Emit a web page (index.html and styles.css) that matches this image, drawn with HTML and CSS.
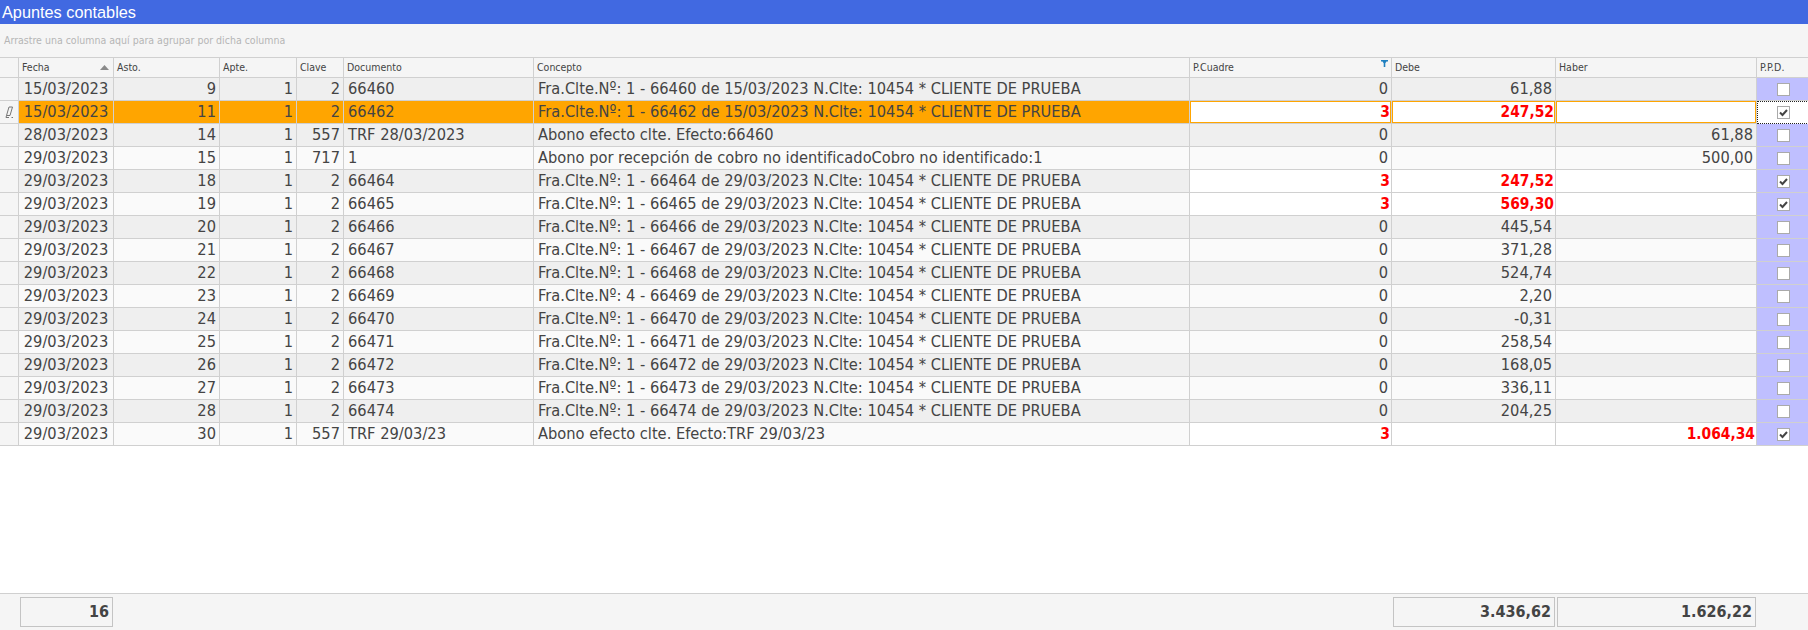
FILE: index.html
```html
<!DOCTYPE html>
<html lang="es">
<head>
<meta charset="utf-8">
<title>Apuntes contables</title>
<link rel="stylesheet" href="styles.css">
</head>
<body>
<div class="app">
  <div class="title">Apuntes contables</div>
  <div class="group">Arrastre una columna aquí para agrupar por dicha columna</div>
  <table class="grid">
    <colgroup>
      <col class="c-ind"><col class="c-fecha"><col class="c-asto"><col class="c-apte"><col class="c-clave"><col class="c-doc"><col class="c-con"><col class="c-cua"><col class="c-debe"><col class="c-haber"><col class="c-ppd">
    </colgroup>
    <thead>
      <tr>
        <th></th>
        <th><span class="hwrap">Fecha<svg class="sort" width="9" height="5" viewBox="0 0 9 5"><path d="M4.500 0L9 5H0z" fill="#8a8a8a"/></svg></span></th>
        <th>Asto.</th><th>Apte.</th><th>Clave</th><th>Documento</th><th>Concepto</th>
        <th><span class="hwrap">P.Cuadre<svg class="filter" width="7" height="7" viewBox="0 0 7 7"><path d="M0 0H7V1.500H5.500L4.300 3.200V7H2.700V3.200L1.500 1.500H0z" fill="#2080c0"/></svg></span></th>
        <th>Debe</th><th>Haber</th><th>P.P.D.</th>
      </tr>
    </thead>
    <tbody>
      <tr class="odd"><td class="ind"></td><td class="ctr">15/03/2023</td><td class="num">9</td><td class="num">1</td><td class="num">2</td><td>66460</td><td>Fra.Clte.Nº: 1 - 66460 de 15/03/2023 N.Clte: 10454 * CLIENTE DE PRUEBA</td><td class="num">0</td><td class="num">61,88</td><td class="num"></td><td class="ppd"><span class="cb"></span></td></tr>
      <tr class="sel"><td class="ind"><svg class="pencil" width="9" height="12" viewBox="0 0 9 12"><path d="M4 1H7.500L5 9.500H1.500ZM1.500 9.500L1 11.500H4M6.500 11.500H8" fill="none" stroke="#777" stroke-width="1"/></svg></td><td class="ctr">15/03/2023</td><td class="num">11</td><td class="num">1</td><td class="num">2</td><td>66462</td><td>Fra.Clte.Nº: 1 - 66462 de 15/03/2023 N.Clte: 10454 * CLIENTE DE PRUEBA</td><td class="num red box">3</td><td class="num red box">247,52</td><td class="num red box"></td><td class="ppd focus"><span class="cb"><svg viewBox="0 0 11 11"><path d="M2 5.500L4.500 8L9 3" fill="none" stroke="#444" stroke-width="2"/></svg></span></td></tr>
      <tr class="odd"><td class="ind"></td><td class="ctr">28/03/2023</td><td class="num">14</td><td class="num">1</td><td class="num">557</td><td>TRF 28/03/2023</td><td>Abono efecto clte. Efecto:66460</td><td class="num">0</td><td class="num"></td><td class="num">61,88</td><td class="ppd"><span class="cb"></span></td></tr>
      <tr><td class="ind"></td><td class="ctr">29/03/2023</td><td class="num">15</td><td class="num">1</td><td class="num">717</td><td>1</td><td>Abono por recepción de cobro no identificadoCobro no identificado:1</td><td class="num">0</td><td class="num"></td><td class="num">500,00</td><td class="ppd"><span class="cb"></span></td></tr>
      <tr class="odd"><td class="ind"></td><td class="ctr">29/03/2023</td><td class="num">18</td><td class="num">1</td><td class="num">2</td><td>66464</td><td>Fra.Clte.Nº: 1 - 66464 de 29/03/2023 N.Clte: 10454 * CLIENTE DE PRUEBA</td><td class="num red">3</td><td class="num red">247,52</td><td class="num red"></td><td class="ppd"><span class="cb"><svg viewBox="0 0 11 11"><path d="M2 5.500L4.500 8L9 3" fill="none" stroke="#444" stroke-width="2"/></svg></span></td></tr>
      <tr><td class="ind"></td><td class="ctr">29/03/2023</td><td class="num">19</td><td class="num">1</td><td class="num">2</td><td>66465</td><td>Fra.Clte.Nº: 1 - 66465 de 29/03/2023 N.Clte: 10454 * CLIENTE DE PRUEBA</td><td class="num red">3</td><td class="num red">569,30</td><td class="num red"></td><td class="ppd"><span class="cb"><svg viewBox="0 0 11 11"><path d="M2 5.500L4.500 8L9 3" fill="none" stroke="#444" stroke-width="2"/></svg></span></td></tr>
      <tr class="odd"><td class="ind"></td><td class="ctr">29/03/2023</td><td class="num">20</td><td class="num">1</td><td class="num">2</td><td>66466</td><td>Fra.Clte.Nº: 1 - 66466 de 29/03/2023 N.Clte: 10454 * CLIENTE DE PRUEBA</td><td class="num">0</td><td class="num">445,54</td><td class="num"></td><td class="ppd"><span class="cb"></span></td></tr>
      <tr><td class="ind"></td><td class="ctr">29/03/2023</td><td class="num">21</td><td class="num">1</td><td class="num">2</td><td>66467</td><td>Fra.Clte.Nº: 1 - 66467 de 29/03/2023 N.Clte: 10454 * CLIENTE DE PRUEBA</td><td class="num">0</td><td class="num">371,28</td><td class="num"></td><td class="ppd"><span class="cb"></span></td></tr>
      <tr class="odd"><td class="ind"></td><td class="ctr">29/03/2023</td><td class="num">22</td><td class="num">1</td><td class="num">2</td><td>66468</td><td>Fra.Clte.Nº: 1 - 66468 de 29/03/2023 N.Clte: 10454 * CLIENTE DE PRUEBA</td><td class="num">0</td><td class="num">524,74</td><td class="num"></td><td class="ppd"><span class="cb"></span></td></tr>
      <tr><td class="ind"></td><td class="ctr">29/03/2023</td><td class="num">23</td><td class="num">1</td><td class="num">2</td><td>66469</td><td>Fra.Clte.Nº: 4 - 66469 de 29/03/2023 N.Clte: 10454 * CLIENTE DE PRUEBA</td><td class="num">0</td><td class="num">2,20</td><td class="num"></td><td class="ppd"><span class="cb"></span></td></tr>
      <tr class="odd"><td class="ind"></td><td class="ctr">29/03/2023</td><td class="num">24</td><td class="num">1</td><td class="num">2</td><td>66470</td><td>Fra.Clte.Nº: 1 - 66470 de 29/03/2023 N.Clte: 10454 * CLIENTE DE PRUEBA</td><td class="num">0</td><td class="num">-0,31</td><td class="num"></td><td class="ppd"><span class="cb"></span></td></tr>
      <tr><td class="ind"></td><td class="ctr">29/03/2023</td><td class="num">25</td><td class="num">1</td><td class="num">2</td><td>66471</td><td>Fra.Clte.Nº: 1 - 66471 de 29/03/2023 N.Clte: 10454 * CLIENTE DE PRUEBA</td><td class="num">0</td><td class="num">258,54</td><td class="num"></td><td class="ppd"><span class="cb"></span></td></tr>
      <tr class="odd"><td class="ind"></td><td class="ctr">29/03/2023</td><td class="num">26</td><td class="num">1</td><td class="num">2</td><td>66472</td><td>Fra.Clte.Nº: 1 - 66472 de 29/03/2023 N.Clte: 10454 * CLIENTE DE PRUEBA</td><td class="num">0</td><td class="num">168,05</td><td class="num"></td><td class="ppd"><span class="cb"></span></td></tr>
      <tr><td class="ind"></td><td class="ctr">29/03/2023</td><td class="num">27</td><td class="num">1</td><td class="num">2</td><td>66473</td><td>Fra.Clte.Nº: 1 - 66473 de 29/03/2023 N.Clte: 10454 * CLIENTE DE PRUEBA</td><td class="num">0</td><td class="num">336,11</td><td class="num"></td><td class="ppd"><span class="cb"></span></td></tr>
      <tr class="odd"><td class="ind"></td><td class="ctr">29/03/2023</td><td class="num">28</td><td class="num">1</td><td class="num">2</td><td>66474</td><td>Fra.Clte.Nº: 1 - 66474 de 29/03/2023 N.Clte: 10454 * CLIENTE DE PRUEBA</td><td class="num">0</td><td class="num">204,25</td><td class="num"></td><td class="ppd"><span class="cb"></span></td></tr>
      <tr><td class="ind"></td><td class="ctr">29/03/2023</td><td class="num">30</td><td class="num">1</td><td class="num">557</td><td>TRF 29/03/23</td><td>Abono efecto clte. Efecto:TRF 29/03/23</td><td class="num red">3</td><td class="num red"></td><td class="num red">1.064,34</td><td class="ppd"><span class="cb"><svg viewBox="0 0 11 11"><path d="M2 5.500L4.500 8L9 3" fill="none" stroke="#444" stroke-width="2"/></svg></span></td></tr>
    </tbody>
  </table>
  <div class="spacer"></div>
  <div class="footer">
    <div class="total t-count">16</div>
    <div class="gap"></div>
    <div class="total t-debe">3.436,62</div>
    <div class="total t-haber">1.626,22</div>
  </div>
</div>
</body>
</html>
```
FILE: styles.css
```css
* { box-sizing: border-box; }
html, body { margin: 0; padding: 0; background: #fff; }
body { font-family: "DejaVu Sans", "Liberation Sans", sans-serif; color: #444; }
.app { width: 1808px; height: 630px; display: flex; flex-direction: column; overflow: hidden; }
.title { height: 24px; background: #4169e1; color: #fff; font-family: "Liberation Sans", sans-serif; font-size: 16.3px; line-height: 24px; padding-left: 2px; }
.group { height: 34px; background: #f5f5f5; border-bottom: 1px solid #d0d0d0; font-size: 10.5px; font-stretch: condensed; line-height: 32px; color: #b5b5b5; padding-left: 4px; }
.grid { width: 1808px; table-layout: fixed; border-collapse: separate; border-spacing: 0; }
.c-ind { width: 19px; } .c-fecha { width: 95px; } .c-asto { width: 106px; } .c-apte { width: 77px; } .c-clave { width: 47px; } .c-doc { width: 190px; } .c-con { width: 656px; } .c-cua { width: 202px; } .c-debe { width: 164px; } .c-haber { width: 201px; } .c-ppd { width: 52px; }
th { height: 20px; background: #f5f5f5; border-right: 1px solid #d0d0d0; border-bottom: 1px solid #d0d0d0; font-weight: normal; font-size: 10.5px; font-stretch: condensed; text-align: left; padding: 0 3px 2px; color: #444; }
th:last-child { border-right: 0; }
.hwrap { display: flex; align-items: center; justify-content: space-between; }
.sort { margin: 2px 1px 0 0; }
.filter { margin: -7px 0 0 0; }
td { height: 23px; padding: 0 3px 0 4px; border-right: 1px solid #d0d0d0; border-bottom: 1px solid #d0d0d0; font-size: 16.3px; line-height: 20px; font-stretch: condensed; white-space: nowrap; overflow: hidden; background: #fafafa; }
td:last-child { border-right: 0; }
.odd td { background: #efefef; }
.sel td { background: #ffa500; }
td.ind { background: #f5f5f5; padding: 0; text-align: center; }
.pencil { display: block; margin: 0 0 0 5px; }
td.ctr { text-align: center; padding: 0; }
td.num { text-align: right; padding-left: 0; padding-right: 3px; }
tr td.red { background: #fff; color: #f00; font-weight: bold; font-size: 15.400px; padding-right: 1px; }
.sel td.box { box-shadow: inset 0 0 0 1px #ffa500; }
tr td.ppd { background: #bfbfff; padding: 0; }
.sel td.ppd { background: #fff; border: 1px dotted #222; }
.cb { display: block; width: 13px; height: 13px; margin: 0 auto; border: 1px solid #aaa; background: #fff; }
.cb svg { display: block; width: 11px; height: 11px; }
.spacer { flex: 1; }
.footer { height: 37px; background: #f5f5f5; border-top: 1px solid #d0d0d0; display: flex; gap: 2px; padding: 3px 52px 3px 20px; }
.gap { flex: 1; margin-right: -2px; margin-left: -2px; }
.total { border: 1px solid #c4c4c4; font-weight: bold; font-size: 16px; font-stretch: condensed; text-align: right; padding-right: 3px; line-height: 28px; }
.t-count { width: 93px; } .t-debe { width: 162px; } .t-haber { width: 199px; }
```
